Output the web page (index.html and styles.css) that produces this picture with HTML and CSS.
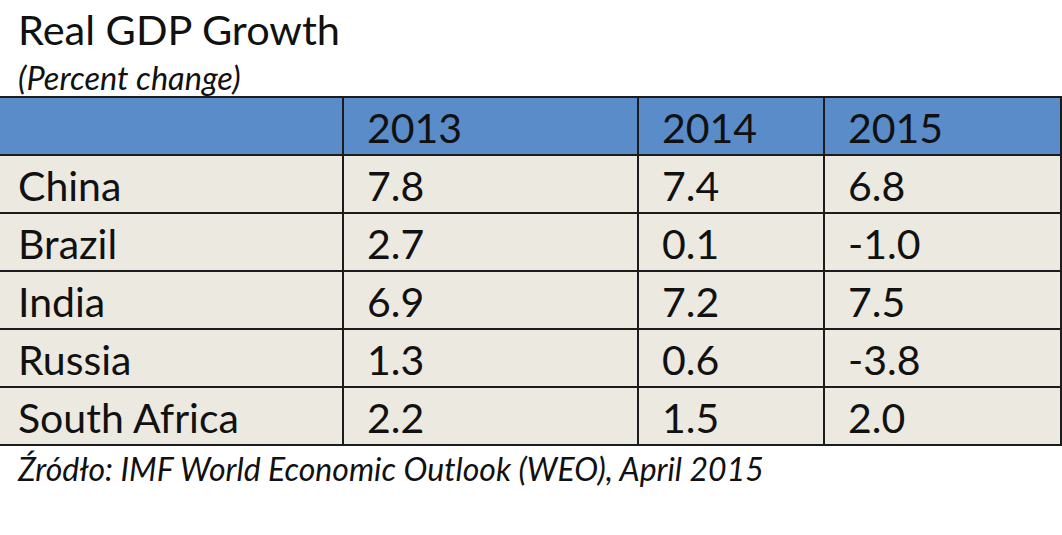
FILE: index.html
```html
<!DOCTYPE html>
<html lang="en">
<head>
<meta charset="utf-8">
<title>Real GDP Growth</title>
<link rel="stylesheet" href="styles.css">
</head>
<body>
<div class="page">
  <h1 class="title">Real GDP Growth</h1>
  <p class="subtitle">(Percent change)</p>
  <table class="gdp">
    <colgroup>
      <col class="c-country">
      <col class="c-2013">
      <col class="c-2014">
      <col class="c-2015">
    </colgroup>
    <thead>
      <tr>
        <th></th>
        <th>2013</th>
        <th>2014</th>
        <th>2015</th>
      </tr>
    </thead>
    <tbody>
      <tr><td>China</td><td>7.8</td><td>7.4</td><td>6.8</td></tr>
      <tr><td>Brazil</td><td>2.7</td><td>0.1</td><td>-1.0</td></tr>
      <tr><td>India</td><td>6.9</td><td>7.2</td><td>7.5</td></tr>
      <tr><td>Russia</td><td>1.3</td><td>0.6</td><td>-3.8</td></tr>
      <tr><td>South Africa</td><td>2.2</td><td>1.5</td><td>2.0</td></tr>
    </tbody>
  </table>
  <p class="source">Źródło: IMF World Economic Outlook (WEO), April 2015</p>
</div>
</body>
</html>
```
FILE: styles.css
```css
html, body {
  margin: 0;
  padding: 0;
  background: #ffffff;
}

.page {
  width: 1062px;
  font-family: "Lato", "Open Sans", sans-serif;
  color: #111111;
}

.title {
  margin: 0;
  padding-left: 18px;
  font-size: 41.5px;
  font-weight: 400;
  line-height: 58px;
  height: 56px;
}

.subtitle {
  margin: 0;
  padding-left: 18px;
  font-style: italic;
  font-size: 32.5px;
  line-height: 44px;
  height: 40px;
}

.gdp {
  width: 1061px;
  border-collapse: collapse;
  table-layout: fixed;
  font-size: 41px;
}

.c-country { width: 343px; }
.c-2013 { width: 295px; }
.c-2014 { width: 186px; }
.c-2015 { width: 237px; }

.gdp th,
.gdp td {
  border: 2px solid #1c1c1c;
  text-align: left;
  vertical-align: middle;
  padding: 4px 0 0 23px;
  font-weight: 400;
  line-height: 40px;
}

.gdp th:first-child,
.gdp td:first-child {
  border-left: none;
  padding-left: 18px;
}

.gdp thead tr {
  height: 58px;
  background: #5a8cca;
}

.gdp tbody tr {
  height: 58px;
  background: #ece9e0;
}

.source {
  margin: 0;
  padding-left: 18px;
  font-style: italic;
  font-size: 32px;
  line-height: 46px;
}
```
